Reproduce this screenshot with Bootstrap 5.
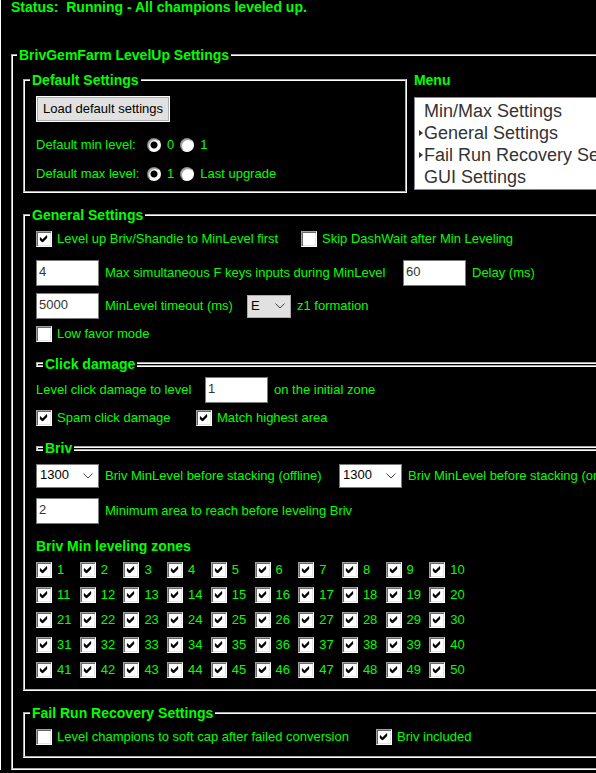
<!DOCTYPE html>
<html lang="en">
<head>
<meta charset="utf-8">
<meta name="viewport" content="width=device-width, initial-scale=1">
<title>BrivGemFarm LevelUp Settings</title>
<link href="https://cdn.jsdelivr.net/npm/bootstrap@5.3.0/dist/css/bootstrap.min.css" rel="stylesheet">
<style>
  body {
    background: #000;
    color: #00ff00;
    font: 13px/16px "Liberation Sans", Arial, sans-serif;
    border-left: 1px solid #fff;
    overflow-x: hidden;
    white-space: nowrap;
  }
  .heading, .groupbox > legend { font-size: 14px; line-height: 18px; font-weight: 700; }
  .status-line { line-height: 14px; padding-left: 10px; margin-bottom: 32px; }
  .groupbox { border: 2px groove #fff; }
  .groupbox > legend { float: none; width: auto; margin: 0 0 0 -6px; padding: 0 2px; }
  .open-end { border-right: 0; }
  .outer-box { margin-left: 10px; padding: 7px 0 10px 10px; }
  .inner-pad { padding: 7px 0 11px 11px; }
  .top-row { gap: 7px; margin-bottom: 13px; }
  .defaults { flex: 0 0 67%; padding-bottom: 3px; }
  .general { margin-bottom: 13px; }

  .win-btn {
    background: #e1e1e1; color: #000; font-size: 13px; line-height: 20px; padding: 1px 5px;
    border: 2px solid #adadad; outline: 1px solid #fff; outline-offset: -1px; border-radius: 0; height: 26px;
  }
  .radio-row { height: 29px; gap: 6px; }
  .radio-row .caption { min-width: 105px; }

  .field { display: flex; align-items: center; gap: 6px; }
  .field.tick { gap: 5px; }
  .line { display: flex; align-items: center; }
  .span-160 { min-width: 160px; }
  .span-169 { min-width: 169px; }
  .span-211 { min-width: 211px; }
  .span-265 { min-width: 265px; }
  .span-303 { min-width: 303px; }
  .span-340 { min-width: 340px; }
  .span-367 { min-width: 367px; }
  .gap-s { margin-bottom: 7px; }
  .gap-m { margin-bottom: 10px; }
  .gap-l { margin-bottom: 13px; }

  .tick input {
    appearance: none; flex: none; margin: 0; width: 16px; height: 16px;
    border: 1px solid; border-color: #a0a0a0 #fff #fff #a0a0a0;
    box-shadow: inset 1px 1px #696969, inset -1px -1px #e3e3e3;
    background: #fff;
  }
  .tick input:checked {
    background: #fff url("data:image/svg+xml,%3Csvg xmlns='http://www.w3.org/2000/svg' viewBox='0 0 14 14'%3E%3Cpath d='M3 5.5V8L5 10H6L10 6V3.500H9.500L5.500 7.500L3.500 5.500Z' stroke='%23000' stroke-width='.3'/%3E%3C/svg%3E") center/14px no-repeat;
  }
  .radio-row input {
    appearance: none; flex: none; margin: 0; width: 14px; height: 14px; border-radius: 50%;
    border: 1px solid; border-color: #808080 #fff #fff #808080;
    box-shadow: inset 1px 1px #a0a0a0; background: #fff;
  }
  .radio-row input:checked { background: radial-gradient(circle, #000 3px, #fff 4px); }

  .edit, .drop { flex: none; width: 63px; border-radius: 0; border: 1px solid #7a7a7a; font-size: 13px; line-height: 16px; }
  .edit { height: 26px; padding: 0 2px 4px; background: #fff; color: #333; }
  .drop {
    appearance: none; height: 24px; padding: 0 2px 2px 3px; color: #000;
    background: #fff url("data:image/svg+xml,%3Csvg xmlns='http://www.w3.org/2000/svg' viewBox='0 0 10 6'%3E%3Cpath d='M.5.5L5 5L9.500.5' fill='none' stroke='%23444'/%3E%3C/svg%3E") right 5px center/10px 6px no-repeat;
  }
  .drop.short { width: 44px; height: 23px; padding-bottom: 0; background-color: #e1e1e1; border-color: #adadad; }

  .divider { display: flex; align-items: center; }
  .divider::before, .divider::after { content: ""; height: 5px; border: 2px groove #fff; border-right: 0; }
  .divider::before { width: 7px; margin-right: 2px; }
  .divider::after { flex: 1; border-left: 0; margin-left: 2px; }

  .zones { display: grid; max-width: 437px; grid-template-columns: repeat(10, 1fr); row-gap: 9px; }

  .menu-title { margin-bottom: 8px; }
  .menu-list { border: 1px solid #828790; border-right: 0; border-radius: 0; background: #fff; padding: 2px 0 1px; }
  .menu-list button {
    display: flex; align-items: center; border: 0; background: none; color: #333; text-align: left;
    font-size: 18px; line-height: 22px; padding: 0 0 0 4px;
  }
  .menu-list svg { width: 5px; height: 6px; flex: none; }
</style>
</head>
<body>
<main>
  <div class="heading status-line">Status:&nbsp; Running - All champions leveled up.</div>

  <fieldset class="groupbox open-end outer-box">
    <legend>BrivGemFarm LevelUp Settings</legend>

    <div class="d-flex top-row">
      <fieldset class="groupbox inner-pad defaults">
        <legend>Default Settings</legend>
        <button type="button" class="btn win-btn mb-2 d-block">Load default settings</button>
        <div class="d-flex align-items-center radio-row" role="radiogroup" aria-labelledby="minCap">
          <span class="caption" id="minCap">Default min level:</span>
          <input type="radio" name="min" id="min0" checked><label for="min0">0</label>
          <input type="radio" name="min" id="min1"><label for="min1">1</label>
        </div>
        <div class="d-flex align-items-center radio-row" role="radiogroup" aria-labelledby="maxCap">
          <span class="caption" id="maxCap">Default max level:</span>
          <input type="radio" name="max" id="max1" checked><label for="max1">1</label>
          <input type="radio" name="max" id="maxLast"><label for="maxLast">Last upgrade</label>
        </div>
      </fieldset>
      <nav class="flex-fill" aria-labelledby="menuTitle">
        <div class="heading menu-title" id="menuTitle">Menu</div>
        <div class="list-group menu-list">
          <button type="button"><svg></svg>Min/Max Settings</button>
          <button type="button"><svg viewBox="0 0 5 6"><path d="M0 0V6L4 3Z" fill="#333"/></svg>General Settings</button>
          <button type="button"><svg viewBox="0 0 5 6"><path d="M0 0V6L4 3Z" fill="#333"/></svg>Fail Run Recovery Settings</button>
          <button type="button"><svg></svg>GUI Settings</button>
        </div>
      </nav>
    </div>

    <fieldset class="groupbox open-end inner-pad general">
      <legend>General Settings</legend>
      <div class="line gap-l">
        <div class="field tick span-265"><input type="checkbox" id="levelFirst" checked><label for="levelFirst">Level up Briv/Shandie to MinLevel first</label></div>
        <div class="field tick"><input type="checkbox" id="skipDash"><label for="skipDash">Skip DashWait after Min Leveling</label></div>
      </div>
      <div class="line gap-s">
        <div class="field span-367"><input class="edit" type="text" id="fkeys" value="4"><label for="fkeys">Max simultaneous F keys inputs during MinLevel</label></div>
        <div class="field"><input class="edit" type="text" id="delay" value="60"><label for="delay">Delay (ms)</label></div>
      </div>
      <div class="line gap-s">
        <div class="field span-211"><input class="edit" type="text" id="timeout" value="5000"><label for="timeout">MinLevel timeout (ms)</label></div>
        <div class="field"><select class="drop short" id="formation"><option>E</option></select><label for="formation">z1 formation</label></div>
      </div>
      <div class="field tick gap-l"><input type="checkbox" id="lowFavor"><label for="lowFavor">Low favor mode</label></div>

      <div class="divider heading">Click damage</div>
      <div class="line gap-s pt-1">
        <label class="span-169" for="clickLevel">Level click damage to level</label>
        <div class="field"><input class="edit" type="text" id="clickLevel" value="1"><label for="clickLevel">on the initial zone</label></div>
      </div>
      <div class="line gap-l">
        <div class="field tick span-160"><input type="checkbox" id="spam" checked><label for="spam">Spam click damage</label></div>
        <div class="field tick"><input type="checkbox" id="match" checked><label for="match">Match highest area</label></div>
      </div>

      <div class="divider heading gap-s">Briv</div>
      <div class="line gap-m">
        <div class="field span-303"><select class="drop" id="offline"><option>1300</option></select><label for="offline">Briv MinLevel before stacking (offline)</label></div>
        <div class="field"><select class="drop" id="online"><option>1300</option></select><label for="online">Briv MinLevel before stacking (online)</label></div>
      </div>
      <div class="field gap-l"><input class="edit" type="text" id="minArea" value="2"><label for="minArea">Minimum area to reach before leveling Briv</label></div>

      <div class="heading gap-s">Briv Min leveling zones</div>
      <div class="zones" id="zones"></div>
    </fieldset>

    <fieldset class="groupbox open-end inner-pad">
      <legend>Fail Run Recovery Settings</legend>
      <div class="line">
        <div class="field tick span-340"><input type="checkbox" id="softCap"><label for="softCap">Level champions to soft cap after failed conversion</label></div>
        <div class="field tick"><input type="checkbox" id="brivIncluded" checked><label for="brivIncluded">Briv included</label></div>
      </div>
    </fieldset>
  </fieldset>
</main>
<script src="https://cdn.jsdelivr.net/npm/bootstrap@5.3.0/dist/js/bootstrap.bundle.min.js"></script>
<script>
  const zones = document.getElementById('zones');
  for (let n = 1; n <= 50; n++) {
    zones.insertAdjacentHTML('beforeend',
      `<div class="field tick"><input type="checkbox" id="zone${n}" checked><label for="zone${n}">${n}</label></div>`);
  }
</script>
</body>
</html>
